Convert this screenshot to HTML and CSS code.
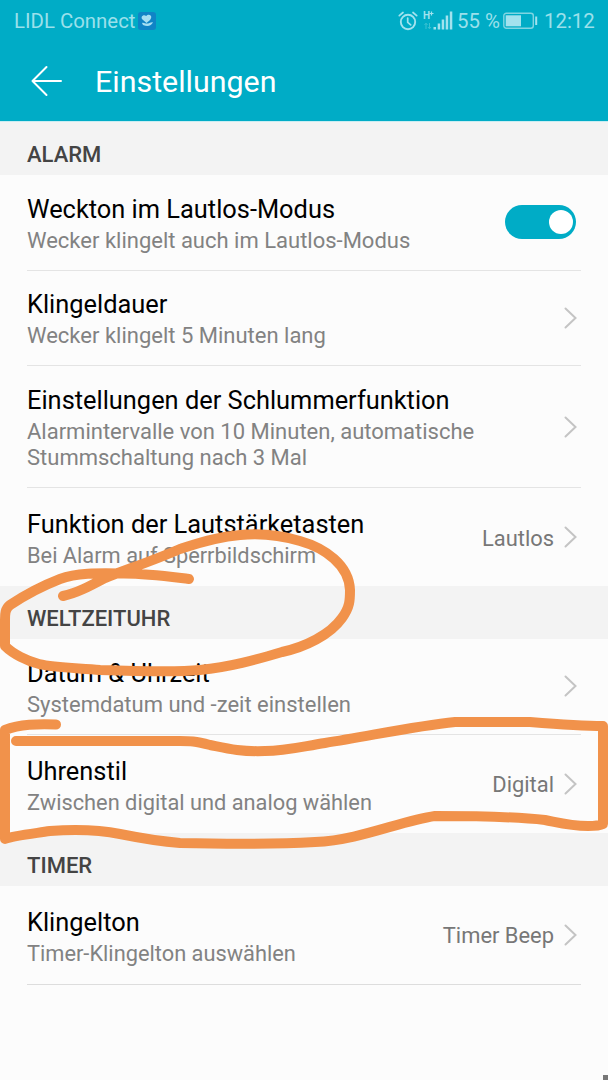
FILE: index.html
```
<!DOCTYPE html>
<html lang="de">
<head>
    <meta charset="utf-8">
    <meta name="viewport" content="width=device-width, initial-scale=1">
    <title>Einstellungen</title>
    <link rel="stylesheet" href="styles.css">
</head>
<body>
<header>
    <div class="status">
        <span class="carrier">LIDL Connect</span>
        <svg class="app-icon" width="18" height="18" viewBox="0 0 18 18">
            <rect width="18" height="18" rx="3" fill="#0f84c6"/>
            <path d="M8.500 11 4.200 7.200C2.200 4.700 5.700 1.500 8.200 4.100c1.900-2.800 6.100-1 4.900 2-.7 2-2.700 3.400-4.600 4.900z" fill="#a6dff2"/>
            <path d="M4 11c2-.8 3 .8 5 .6 2 0 3-1.600 6-1.300-1.500 3.600-5.500 4.600-10 2.600z" fill="#a6dff2"/>
        </svg>
        <svg class="alarm-icon" width="20" height="20" viewBox="0 0 20 20" fill="none" stroke="#a2e2ee" stroke-linecap="round">
            <circle cx="10" cy="11" r="7.200" stroke-width="1.900"/>
            <path d="M9.700 7v4.300l3 2.600" stroke-width="1.700"/>
            <path d="M1.300 4.700 5 1.500M18.700 4.700 15 1.500" stroke-width="1.700"/>
        </svg>
        <svg class="signal-icon" width="31" height="20" viewBox="0 0 31 20" fill="#a2e2ee">
            <text x="0" y="9" class="network">H</text>
            <path d="M6.500 3.500h4M8.500 1.500v4" stroke="#a2e2ee" stroke-width="1.200"/>
            <path d="M3 19v-5.500M1.500 15 3 13.200 4.500 15M6.500 13v5.500M5 17l1.500 1.800L8 17" fill="none" stroke="#3cc2d3"/>
            <path d="M10.500 17h2.500v2.500h-2.500zM14.700 13.500h2.500v6h-2.500zM18.700 9.500h2.500v10h-2.500zM22.700 5.500h2.500v14h-2.500zM26.800 1.500h2.500v18h-2.500z"/>
        </svg>
        <span class="percent">55 %</span>
        <svg class="battery-icon" width="35" height="18" viewBox="0 0 35 18">
            <rect x=".8" y="1.300" width="29.500" height="15" rx="2.500" fill="none" stroke="#80d5e2" stroke-width="1.400"/>
            <rect x="2.700" y="3.300" width="15.300" height="11" fill="#a2e2ee"/>
            <rect x="32.200" y="4.500" width="2" height="8.500" fill="#a2e2ee"/>
        </svg>
        <span class="clock">12:12</span>
    </div>
    <div class="titlebar">
        <svg width="32" height="32" viewBox="0 0 32 32" fill="none" stroke="#fff" stroke-width="2" stroke-linecap="round" stroke-linejoin="round">
            <path d="M15.500 2 1.500 16l14 14M1.500 16h28.500"/>
        </svg>
        <h1>Einstellungen</h1>
    </div>
</header>

<main>
    <h2>ALARM</h2>
    <div class="row">
        <div class="label">
            <div class="title">Weckton im Lautlos-Modus</div>
            <div class="sub">Wecker klingelt auch im Lautlos-Modus</div>
        </div>
        <div class="switch"></div>
    </div>
    <div class="row">
        <div class="label">
            <div class="title">Klingeldauer</div>
            <div class="sub">Wecker klingelt 5 Minuten lang</div>
        </div>
        <svg class="chevron" viewBox="0 0 14 22"><path d="M1.500 1.500 11.500 11l-10 9.500"/></svg>
    </div>
    <div class="row tall">
        <div class="label">
            <div class="title">Einstellungen der Schlummerfunktion</div>
            <div class="sub">Alarmintervalle von 10 Minuten, automatische<br>Stummschaltung nach 3 Mal</div>
        </div>
        <svg class="chevron" viewBox="0 0 14 22"><path d="M1.500 1.500 11.500 11l-10 9.500"/></svg>
    </div>
    <div class="row last">
        <div class="label">
            <div class="title">Funktion der Lautstärketasten</div>
            <div class="sub">Bei Alarm auf Sperrbildschirm</div>
        </div>
        <span class="value">Lautlos</span>
        <svg class="chevron" viewBox="0 0 14 22"><path d="M1.500 1.500 11.500 11l-10 9.500"/></svg>
    </div>

    <h2>WELTZEITUHR</h2>
    <div class="row">
        <div class="label">
            <div class="title">Datum &amp; Uhrzeit</div>
            <div class="sub">Systemdatum und -zeit einstellen</div>
        </div>
        <svg class="chevron" viewBox="0 0 14 22"><path d="M1.500 1.500 11.500 11l-10 9.500"/></svg>
    </div>
    <div class="row last">
        <div class="label">
            <div class="title">Uhrenstil</div>
            <div class="sub">Zwischen digital und analog wählen</div>
        </div>
        <span class="value">Digital</span>
        <svg class="chevron" viewBox="0 0 14 22"><path d="M1.500 1.500 11.500 11l-10 9.500"/></svg>
    </div>

    <h2>TIMER</h2>
    <div class="row last lined">
        <div class="label">
            <div class="title">Klingelton</div>
            <div class="sub">Timer-Klingelton auswählen</div>
        </div>
        <span class="value">Timer Beep</span>
        <svg class="chevron" viewBox="0 0 14 22"><path d="M1.500 1.500 11.500 11l-10 9.500"/></svg>
    </div>
</main>

<!-- hand-drawn marker strokes -->
<svg class="marker" width="608" height="1080" viewBox="0 0 608 1080">
    <path d="M189 579C165 576 145 573 120 573.500C98 573 76 573 60 579C42 586 22 597 10 605C5 609 5 614 5 620L5 646C13 654 27 661 39 664C55 668 80 668 100 670C130 671 180 672 200 670C230 667 255 660 282 652C305 647 330 635 342 618C350 607 350 600 350 590C349 565 325 548 300 541C280 535 260 533 240 535C215 537 195 544 180 549C155 560 125 570 105 578C90 586 77 593 63 596"/>
    <path d="M56 724.500C38 724 20 724 5 730L5 839C12 836 30 834 50 831C80 829 105 831 120 834C140 838 155 841 180 843C220 844 280 844 315 842C360 840 400 821 435 816C470 816 510 816 545 820C560 823 570 826 588 826C594 826 599 826 603 824L603 726C580 726 555 724 530 722C500 722 475 722 455 722C415 726 370 736 325 743C300 747 285 751 265 751C240 752 225 748 210 745C195 741 190 741 180 741L16 741"/>
</svg>
<div class="corner"></div>
</body>
</html>
```
FILE: styles.css
```
body {
    margin: 0;
    height: 1080px;
    position: relative;
    overflow: hidden;
    background: #fcfcfc;
    font-family: Roboto, sans-serif;
}

header {
    height: 121px;
    background: #00acc6;
    border-bottom: 1px solid #c9edf2;
}

.status {
    display: flex;
    align-items: center;
    height: 42px;
    padding: 0 13px 0 14px;
    font-size: 20.4px;
    color: #9be0eb;
    white-space: nowrap;
}

.carrier {
    width: 120px;
}

.app-icon {
    margin-left: 4px;
}

.alarm-icon {
    margin-left: auto;
}

.signal-icon {
    margin: -2px 0 0 5px;
}

.network {
    font-size: 10px;
    font-weight: bold;
}

.percent {
    width: 44px;
    margin-left: 3px;
}

.battery-icon {
    margin: 0 6px 0 2px;
}

.clock {
    width: 51px;
}

.titlebar {
    display: flex;
    align-items: center;
    height: 78px;
    padding-left: 31px;
}

h1 {
    margin: 1px 0 0 32px;
    font-size: 30.4px;
    font-weight: 400;
    color: #fff;
}

h2 {
    box-sizing: border-box;
    height: 53px;
    margin: 0;
    padding: 12px 27px 0;
    background: #f3f3f3;
    font-size: 22px;
    line-height: 42px;
    font-weight: 500;
    color: #444;
}

.row {
    box-sizing: border-box;
    display: flex;
    align-items: center;
    height: 95.5px;
    margin: 0 27px;
    border-bottom: 1.5px solid #e4e4e4;
}

.tall {
    height: 122px;
}

.last {
    height: 98px;
    border-bottom: 0;
}

.lined {
    height: 99px;
    border-bottom: 1px solid #ddd;
}

.label {
    flex: 1;
    padding-top: 3px;
    white-space: nowrap;
}

.last .label {
    padding-top: 4px;
}

.title {
    padding-top: 1px;
    font-size: 25.4px;
    line-height: 28px;
    color: #000;
}

.sub {
    margin-top: 5px;
    font-size: 22px;
    line-height: 26px;
    color: #828282;
}

.last .sub {
    font-size: 21.8px;
}

.value {
    margin-right: 10px;
    padding-top: 2px;
    font-size: 21.9px;
    color: #777;
}

.chevron {
    width: 14px;
    height: 22px;
    margin-right: 3px;
    fill: none;
    stroke: #c4c4c4;
    stroke-width: 2;
    stroke-linecap: round;
}

.switch {
    box-sizing: border-box;
    width: 71px;
    height: 34px;
    margin-right: 5px;
    padding: 5px 3px;
    border-radius: 17px;
    background: #00acc6;
}

.switch::after {
    content: "";
    display: block;
    width: 24px;
    height: 24px;
    margin-left: auto;
    border-radius: 50%;
    background: #fff;
}

.marker {
    position: absolute;
    top: 0;
    left: 0;
    fill: none;
    stroke: #f1924b;
    stroke-width: 10;
    stroke-linecap: round;
    stroke-linejoin: round;
}

.corner {
    position: absolute;
    right: 0;
    bottom: 0;
    width: 5px;
    height: 5px;
    background: #777;
}
```
